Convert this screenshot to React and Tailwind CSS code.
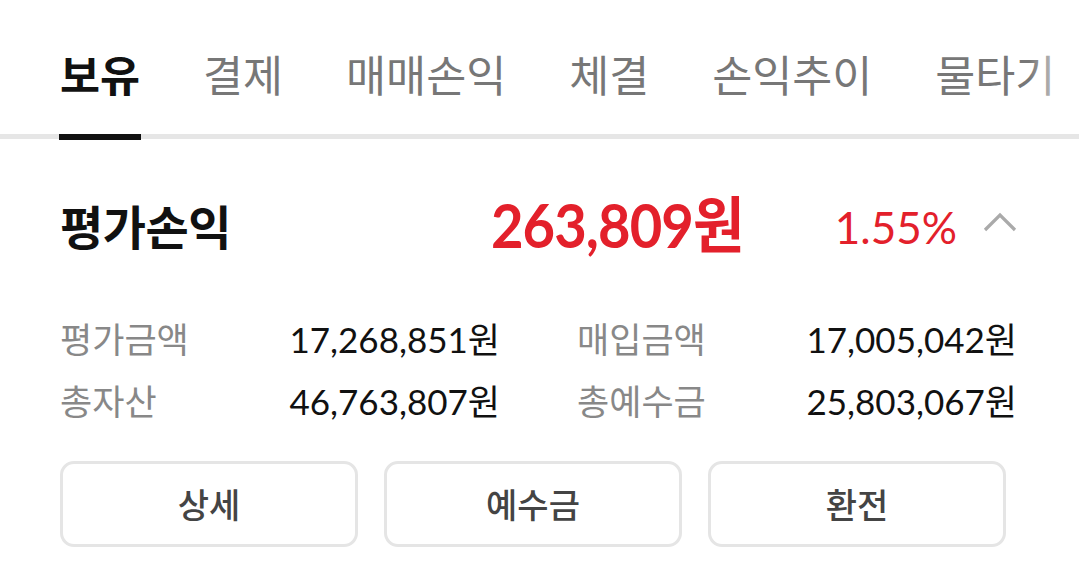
const tabs = ["보유", "결제", "매매손익", "체결", "손익추이", "물타기"];

const rows = [
  ["평가금액", "17,268,851원", "매입금액", "17,005,042원"],
  ["총자산", "46,763,807원", "총예수금", "25,803,067원"],
];

export default function App() {
  return (
    <div
      className="w-[1079px] h-[583px] bg-white overflow-hidden"
      style={{ fontFamily: "Lato, 'Noto Sans CJK KR', sans-serif" }}
    >
      {/* Tabs */}
      <div className="relative border-b-[5px] border-[#e6e6e6] h-[139px]">
        <div className="flex gap-[63px] pl-[60px] pt-[46px] whitespace-nowrap">
          {tabs.map((t, i) => (
            <div key={t} className="relative">
              <span
                className={
                  "text-[43.5px] leading-[58px] " +
                  (i === 0 ? "text-[#111] font-bold" : "text-[#777]")
                }
              >
                {t}
              </span>
              {i === 0 && (
                <div className="absolute left-[-1px] right-[-1px] top-[88px] h-[6px] bg-[#111]" />
              )}
            </div>
          ))}
        </div>
        <div className="absolute right-0 top-0 h-[130px] w-[50px] bg-gradient-to-r from-white/0 to-white" />
      </div>

      {/* Summary */}
      <div className="pr-[62px] pl-[60px]">
        <div className="flex items-center h-[180px]">
          <div className="text-[47px] font-bold text-[#111] tracking-[-0.5px] mt-[-4px]">평가손익</div>
          <div className="ml-auto text-[61px] font-bold text-[#e3202b] tracking-[-1px] mt-[-8px] scale-x-[0.92] origin-right">
            263,809원
          </div>
          <div className="ml-[91px] text-[44px] text-[#e3202b] mt-[-4px]">1.55%</div>
          <svg className="ml-[26px] mt-[-14px]" width="34" height="20" viewBox="0 0 34 20">
            <path d="M2 18 L17 3 L32 18" fill="none" stroke="#aaaaaa" strokeWidth="3.2" />
          </svg>
        </div>

        <div className="flex flex-col gap-[14px] mt-[-6px]">
          {rows.map((r) => (
            <div key={r[0]} className="grid grid-cols-2 gap-[77px] h-[48px] items-center">
              <div className="flex justify-between items-center">
                <span className="text-[35px] text-[#888]">{r[0]}</span>
                <span className="text-[35px] text-[#111]">{r[1]}</span>
              </div>
              <div className="flex justify-between items-center">
                <span className="text-[35px] text-[#888]">{r[2]}</span>
                <span className="text-[35px] text-[#111]">{r[3]}</span>
              </div>
            </div>
          ))}
        </div>

        <div className="flex gap-[26px] mt-[38px]">
          {["상세", "예수금", "환전"].map((b) => (
            <button
              key={b}
              className="w-[298px] h-[86px] border-[3px] border-[#e5e5e5] rounded-[14px] text-[34px] text-[#444] font-medium"
            >
              {b}
            </button>
          ))}
        </div>
      </div>
    </div>
  );
}
